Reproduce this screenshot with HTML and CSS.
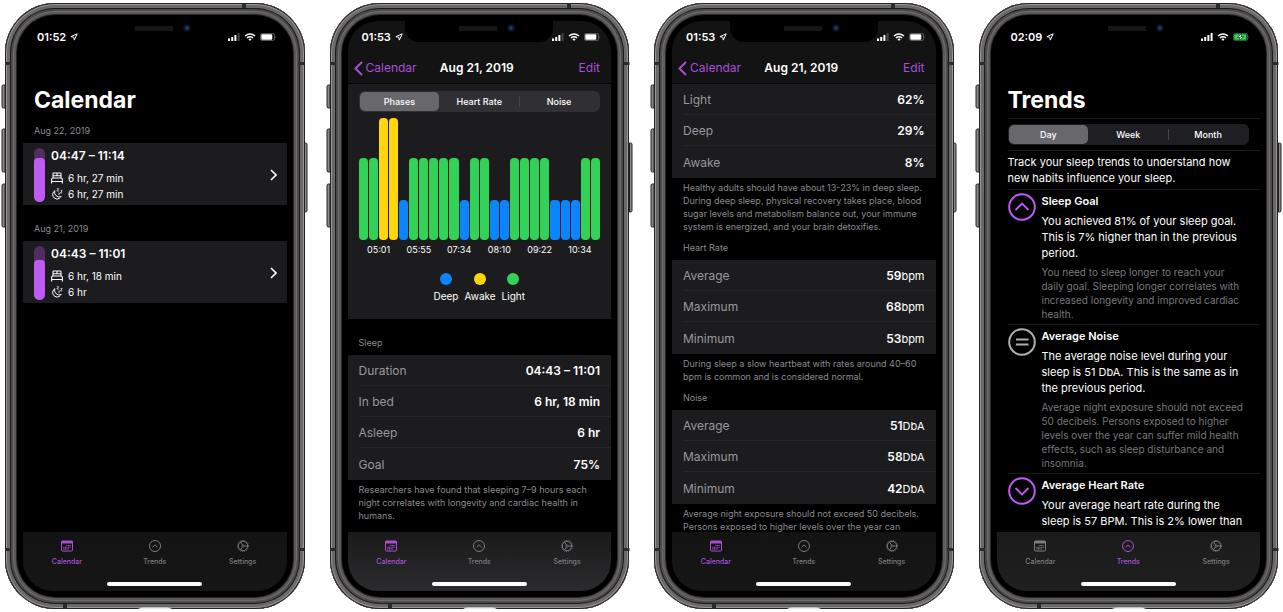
FILE: index.html
```html
<!DOCTYPE html>
<html lang="en">
<head>
<meta charset="utf-8">
<meta name="viewport" content="width=device-width, initial-scale=1">
<title>Sleep tracker</title>
<link rel="stylesheet" href="styles.css">
</head>
<body>
<svg class="sprite" aria-hidden="true">
  <defs>
    <symbol id="hardware" viewBox="-4 0 307.5 606">
      <g fill="#8b8989" stroke="#222" stroke-width="1">
        <path d="M0 82h-1.500q-1.500 0-1.500 1.500v20q0 1.500 1.500 1.500H0z"/>
        <path d="M0 126h-1.500q-1.500 0-1.500 1.500v40q0 1.500 1.500 1.500H0z"/>
        <path d="M0 181h-1.500q-1.500 0-1.500 1.500v40q0 1.500 1.500 1.500H0z"/>
        <path d="M299.500 140h1q1.500 0 1.500 1.500v66q0 1.500-1.500 1.500h-1z"/>
      </g>
      <g fill="#2c2b2b">
        <path d="M0 59h6v3H0zM293.500 59h6v3h-6zM0 545h6v3H0zM293.500 545h6v3h-6zM237 0h4v5h-4zM58 601h4v5h-4z"/>
      </g>
      <path fill="#e8e8e8" d="M133 606q2-1.500 5-1.500h24q3 0 5 1.500z"/>
    </symbol>
    <symbol id="location" viewBox="0 0 8 8"><path d="M7.200.8L.9 3.700l2.900.5.5 2.900z" fill="none" stroke="currentColor" stroke-width="1" stroke-linejoin="round"/></symbol>
    <symbol id="signal-3" viewBox="0 0 12 8"><path fill="currentColor" d="M0 5.500h2V8H0zM3.200 4h2v4h-2zM6.400 2h2v6h-2z"/><path fill="#444" d="M9.600 0h2v8h-2z"/></symbol>
    <symbol id="signal-4" viewBox="0 0 12 8"><path fill="currentColor" d="M0 5.500h2V8H0zM3.200 4h2v4h-2zM6.400 2h2v6h-2zM9.600 0h2v8h-2z"/></symbol>
    <symbol id="wifi" viewBox="0 0 12 8"><path d="M1 3q5-4 10 0M2.900 5q3.100-2.500 6.200 0" fill="none" stroke="currentColor" stroke-width="1.500"/><path d="M4.300 6.100q1.700-1.200 3.400 0L6 8z" fill="currentColor"/></symbol>
    <symbol id="battery" viewBox="0 0 17 8"><rect x=".4" y=".4" width="14.200" height="7.200" rx="2" fill="none" stroke="#777" stroke-width=".8"/><rect x="1.300" y="1.200" width="11" height="5.600" rx="1" fill="currentColor"/><path d="M15.600 2.700q1.200 1.300 0 2.600z" fill="#777"/></symbol>
    <symbol id="battery-charging" viewBox="0 0 17 8"><rect x=".4" y=".4" width="14.200" height="7.200" rx="2" fill="#123c1b" stroke="#3f7a4c" stroke-width=".8"/><rect x="1.300" y="1.200" width="12" height="5.600" rx="1" fill="#32d158"/><path d="M8.800.3L4.500 4.500h2.700l-1 3.200 4.600-4.200H8z" fill="#fff" stroke="#123c1b" stroke-width=".7"/><path d="M15.600 2.700q1.200 1.300 0 2.600z" fill="#777"/></symbol>
    <symbol id="bed" viewBox="0 0 12 12"><path d="M2 5.700V1.800q0-.8.800-.8h6.400q.8 0 .8.800v3.900M6 1v3M2 3.800h8M.6 11.500V7.600Q.6 6 2 6h8q1.400 0 1.400 1.600v3.900M.6 9.500h10.800" fill="none" stroke="currentColor" stroke-width="1.100"/></symbol>
    <symbol id="moon" viewBox="0 0 12 12"><path d="M3.800 2.700a4.500 4.500 0 1 0 6.400 5.800A4.700 4.700 0 0 1 3.800 2.700z" fill="none" stroke="currentColor" stroke-width="1" stroke-linejoin="round" stroke-dasharray="14 1"/><path d="M5.800.7h1.900L5.900 3h1.900M9.400 2.600h1.800L9.400 4.900h1.900M7.600 5h1L7.600 6.300h1.100" fill="none" stroke="currentColor" stroke-width=".7"/></symbol>
    <symbol id="chevron-right" viewBox="0 0 7 12"><path d="M1 1l5 5-5 5" fill="none" stroke="currentColor" stroke-width="1.600"/></symbol>
    <symbol id="chevron-left" viewBox="0 0 9 15"><path d="M8 1L1.500 7.500 8 14" fill="none" stroke="currentColor" stroke-width="2"/></symbol>
    <symbol id="tab-calendar" viewBox="0 0 12 12"><rect x=".5" y="1" width="11" height="10" rx="1" fill="none" stroke="currentColor"/><path d="M.5 1h11v2.500H.5z" fill="currentColor"/><path d="M5.300 5.500h4.900M2.300 7.200h7.900M2.300 8.900h5.500" stroke="currentColor" stroke-width="1.100" stroke-dasharray="1.100 .5"/></symbol>
    <symbol id="tab-trends" viewBox="0 0 12 12"><circle cx="6" cy="6" r="5.500" fill="none" stroke="currentColor"/><path d="M3.500 7.200L6 4.900l2.500 2.300" fill="none" stroke="currentColor"/></symbol>
    <symbol id="tab-settings" viewBox="0 0 12 12"><circle cx="6" cy="6" r="4.700" fill="none" stroke="currentColor"/><circle cx="6" cy="6" r="5.600" fill="none" stroke="currentColor" stroke-width=".9" stroke-dasharray="1 1.199"/><circle cx="6" cy="6" r="1.100" fill="none" stroke="currentColor" stroke-width=".8"/><path d="M7 6h4M5.500 5L3.400 1.900M5.500 7l-2.100 3.100" stroke="currentColor" stroke-width=".9"/></symbol>
    <symbol id="trend-up" viewBox="0 0 28 28"><circle cx="14" cy="14" r="12.800" fill="none" stroke="currentColor" stroke-width="2"/><path d="M7.500 17L14 10.500 20.500 17" fill="none" stroke="currentColor" stroke-width="1.800"/></symbol>
    <symbol id="trend-same" viewBox="0 0 28 28"><circle cx="14" cy="14" r="12.800" fill="none" stroke="currentColor" stroke-width="2"/><path d="M8 11.500h12.500M8 16.500h12.500" stroke="currentColor" stroke-width="1.800"/></symbol>
    <symbol id="trend-down" viewBox="0 0 28 28"><circle cx="14" cy="14" r="12.800" fill="none" stroke="currentColor" stroke-width="2"/><path d="M7.500 11L14 17.500 20.500 11" fill="none" stroke="currentColor" stroke-width="1.800"/></symbol>
  </defs>
</svg>

<main class="phones">

  <section class="phone" aria-label="Calendar list">
    <svg class="hardware" aria-hidden="true"><use href="#hardware"/></svg>
    <div class="screen">
      <div class="notch"></div>
      <div class="status">
        <span class="status-time">01:52</span><svg class="icon-location"><use href="#location"/></svg>
        <svg class="icon-signal"><use href="#signal-3"/></svg><svg class="icon-wifi"><use href="#wifi"/></svg><svg class="icon-battery"><use href="#battery"/></svg>
      </div>
      <div class="content">
        <h1 class="title">Calendar</h1>
        <h2 class="group-label">Aug 22, 2019</h2>
        <a class="night" href="#night-22">
          <span class="goal"><span class="goal-fill" style="height:81%"></span></span>
          <span class="night-info">
            <strong class="night-time">04:47 – 11:14</strong>
            <span class="night-row"><svg class="icon-row"><use href="#bed"/></svg>6 hr, 27 min</span>
            <span class="night-row"><svg class="icon-row"><use href="#moon"/></svg>6 hr, 27 min</span>
          </span>
          <svg class="icon-chevron"><use href="#chevron-right"/></svg>
        </a>
        <h2 class="group-label">Aug 21, 2019</h2>
        <a class="night" href="#night-21">
          <span class="goal"><span class="goal-fill" style="height:75%"></span></span>
          <span class="night-info">
            <strong class="night-time">04:43 – 11:01</strong>
            <span class="night-row"><svg class="icon-row"><use href="#bed"/></svg>6 hr, 18 min</span>
            <span class="night-row"><svg class="icon-row"><use href="#moon"/></svg>6 hr</span>
          </span>
          <svg class="icon-chevron"><use href="#chevron-right"/></svg>
        </a>
      </div>
      <footer class="dock">
        <nav class="tabs">
          <a class="tab tab-active" href="#calendar"><svg class="icon-tab"><use href="#tab-calendar"/></svg>Calendar</a>
          <a class="tab" href="#trends"><svg class="icon-tab"><use href="#tab-trends"/></svg>Trends</a>
          <a class="tab" href="#settings"><svg class="icon-tab"><use href="#tab-settings"/></svg>Settings</a>
        </nav>
        <div class="home"></div>
      </footer>
    </div>
  </section>

  <section class="phone" aria-label="Night phases">
    <svg class="hardware" aria-hidden="true"><use href="#hardware"/></svg>
    <div class="screen">
      <div class="notch"></div>
      <header class="bar">
        <div class="status">
          <span class="status-time">01:53</span><svg class="icon-location"><use href="#location"/></svg>
          <svg class="icon-signal"><use href="#signal-3"/></svg><svg class="icon-wifi"><use href="#wifi"/></svg><svg class="icon-battery"><use href="#battery"/></svg>
        </div>
        <div class="navbar">
          <a class="back" href="#calendar"><svg class="icon-back"><use href="#chevron-left"/></svg>Calendar</a>
          <h1 class="nav-title">Aug 21, 2019</h1>
          <button class="edit" type="button">Edit</button>
        </div>
      </header>
      <div class="content">
        <div class="chart-card">
          <div class="segments">
            <button class="segment segment-on" type="button">Phases</button>
            <button class="segment" type="button">Heart Rate</button>
            <button class="segment segment-split" type="button">Noise</button>
          </div>
          <div class="chart" role="img" aria-label="Sleep phases over the night">
            <span class="phase light"></span><span class="phase light"></span><span class="phase awake"></span><span class="phase awake"></span>
            <span class="phase deep"></span><span class="phase light"></span><span class="phase light"></span><span class="phase light"></span>
            <span class="phase light"></span><span class="phase light"></span><span class="phase deep"></span><span class="phase light"></span>
            <span class="phase light"></span><span class="phase deep"></span><span class="phase deep"></span><span class="phase light"></span>
            <span class="phase light"></span><span class="phase light"></span><span class="phase light"></span><span class="phase deep"></span>
            <span class="phase deep"></span><span class="phase deep"></span><span class="phase light"></span><span class="phase light"></span>
          </div>
          <div class="axis"><span>05:01</span><span>05:55</span><span>07:34</span><span>08:10</span><span>09:22</span><span>10:34</span></div>
          <ul class="legend">
            <li class="legend-item"><span class="dot deep-dot"></span>Deep</li>
            <li class="legend-item"><span class="dot awake-dot"></span>Awake</li>
            <li class="legend-item"><span class="dot light-dot"></span>Light</li>
          </ul>
        </div>
        <h2 class="group-label">Sleep</h2>
        <table class="stats">
          <tr><th scope="row">Duration</th><td>04:43 – 11:01</td></tr>
          <tr><th scope="row">In bed</th><td>6 hr, 18 min</td></tr>
          <tr><th scope="row">Asleep</th><td>6 hr</td></tr>
          <tr><th scope="row">Goal</th><td>75%</td></tr>
        </table>
        <p class="note">Researchers have found that sleeping 7–9 hours each night correlates with longevity and cardiac health in humans.</p>
      </div>
      <footer class="dock dock-light">
        <nav class="tabs">
          <a class="tab tab-active" href="#calendar"><svg class="icon-tab"><use href="#tab-calendar"/></svg>Calendar</a>
          <a class="tab" href="#trends"><svg class="icon-tab"><use href="#tab-trends"/></svg>Trends</a>
          <a class="tab" href="#settings"><svg class="icon-tab"><use href="#tab-settings"/></svg>Settings</a>
        </nav>
        <div class="home"></div>
      </footer>
    </div>
  </section>

  <section class="phone" aria-label="Night statistics">
    <svg class="hardware" aria-hidden="true"><use href="#hardware"/></svg>
    <div class="screen">
      <div class="notch"></div>
      <header class="bar">
        <div class="status">
          <span class="status-time">01:53</span><svg class="icon-location"><use href="#location"/></svg>
          <svg class="icon-signal"><use href="#signal-3"/></svg><svg class="icon-wifi"><use href="#wifi"/></svg><svg class="icon-battery"><use href="#battery"/></svg>
        </div>
        <div class="navbar">
          <a class="back" href="#calendar"><svg class="icon-back"><use href="#chevron-left"/></svg>Calendar</a>
          <h1 class="nav-title">Aug 21, 2019</h1>
          <button class="edit" type="button">Edit</button>
        </div>
      </header>
      <div class="content">
        <table class="stats">
          <tr><th scope="row">Light</th><td>62%</td></tr>
          <tr><th scope="row">Deep</th><td>29%</td></tr>
          <tr><th scope="row">Awake</th><td>8%</td></tr>
        </table>
        <p class="note">Healthy adults should have about 13-23% in deep sleep. During deep sleep, physical recovery takes place, blood sugar levels and metabolism balance out, your immune system is energized, and your brain detoxifies.</p>
        <h2 class="group-label">Heart Rate</h2>
        <table class="stats">
          <tr><th scope="row">Average</th><td>59<span class="unit">bpm</span></td></tr>
          <tr><th scope="row">Maximum</th><td>68<span class="unit">bpm</span></td></tr>
          <tr><th scope="row">Minimum</th><td>53<span class="unit">bpm</span></td></tr>
        </table>
        <p class="note">During sleep a slow heartbeat with rates around 40–60 bpm is common and is considered normal.</p>
        <h2 class="group-label">Noise</h2>
        <table class="stats">
          <tr><th scope="row">Average</th><td>51<span class="unit">DbA</span></td></tr>
          <tr><th scope="row">Maximum</th><td>58<span class="unit">DbA</span></td></tr>
          <tr><th scope="row">Minimum</th><td>42<span class="unit">DbA</span></td></tr>
        </table>
        <p class="note">Average night exposure should not exceed 50 decibels. Persons exposed to higher levels over the year can</p>
      </div>
      <footer class="dock">
        <nav class="tabs">
          <a class="tab tab-active" href="#calendar"><svg class="icon-tab"><use href="#tab-calendar"/></svg>Calendar</a>
          <a class="tab" href="#trends"><svg class="icon-tab"><use href="#tab-trends"/></svg>Trends</a>
          <a class="tab" href="#settings"><svg class="icon-tab"><use href="#tab-settings"/></svg>Settings</a>
        </nav>
        <div class="home"></div>
      </footer>
    </div>
  </section>

  <section class="phone" aria-label="Trends">
    <svg class="hardware" aria-hidden="true"><use href="#hardware"/></svg>
    <div class="screen">
      <div class="notch"></div>
      <div class="status">
        <span class="status-time">02:09</span><svg class="icon-location"><use href="#location"/></svg>
        <svg class="icon-signal"><use href="#signal-4"/></svg><svg class="icon-wifi"><use href="#wifi"/></svg><svg class="icon-battery"><use href="#battery-charging"/></svg>
      </div>
      <div class="content">
        <h1 class="title">Trends</h1>
        <div class="trends">
          <div class="trend-range">
            <div class="segments segments-dark">
              <button class="segment segment-on" type="button">Day</button>
              <button class="segment" type="button">Week</button>
              <button class="segment segment-split" type="button">Month</button>
            </div>
          </div>
          <p class="intro">Track your sleep trends to understand how new habits influence your sleep.</p>
          <article class="trend">
            <svg class="icon-trend"><use href="#trend-up"/></svg>
            <div class="trend-text">
              <h2 class="trend-name">Sleep Goal</h2>
              <p class="trend-main">You achieved 81% of your sleep goal. This is 7% higher than in the previous period.</p>
              <p class="trend-hint">You need to sleep longer to reach your daily goal. Sleeping longer correlates with increased longevity and improved cardiac health.</p>
            </div>
          </article>
          <article class="trend">
            <svg class="icon-trend neutral"><use href="#trend-same"/></svg>
            <div class="trend-text">
              <h2 class="trend-name">Average Noise</h2>
              <p class="trend-main">The average noise level during your sleep is 51 DbA. This is the same as in the previous period.</p>
              <p class="trend-hint">Average night exposure should not exceed 50 decibels. Persons exposed to higher levels over the year can suffer mild health effects, such as sleep disturbance and insomnia.</p>
            </div>
          </article>
          <article class="trend">
            <svg class="icon-trend"><use href="#trend-down"/></svg>
            <div class="trend-text">
              <h2 class="trend-name">Average Heart Rate</h2>
              <p class="trend-main">Your average heart rate during the sleep is 57 BPM. This is 2% lower than</p>
            </div>
          </article>
        </div>
      </div>
      <footer class="dock dock-mid">
        <nav class="tabs">
          <a class="tab" href="#calendar"><svg class="icon-tab"><use href="#tab-calendar"/></svg>Calendar</a>
          <a class="tab tab-active" href="#trends"><svg class="icon-tab"><use href="#tab-trends"/></svg>Trends</a>
          <a class="tab" href="#settings"><svg class="icon-tab"><use href="#tab-settings"/></svg>Settings</a>
        </nav>
        <div class="home"></div>
      </footer>
    </div>
  </section>

</main>
</body>
</html>
```

FILE: styles.css
```css
* { box-sizing: border-box; margin: 0; padding: 0; }

body {
  background: #fff;
  color: #fff;
  font-family: Inter, "Liberation Sans", sans-serif;
  font-size: 12px;
  line-height: 16px;
}

a { color: inherit; text-decoration: none; }
button { border: 0; background: none; color: inherit; font: inherit; }
svg { display: block; flex: none; }

.sprite { position: absolute; width: 0; height: 0; }

/* Device frames */
.phones {
  display: grid;
  grid-template-columns: repeat(4, minmax(0, 1fr));
  gap: 25px;
  padding: 3px 5px;
}

.phone {
  position: relative;
  min-height: 0;
  aspect-ratio: 299 / 605;
  padding: 18px;
  border-radius: 50px;
  background: #000;
  box-shadow:
    inset 0 0 0 1px #242323,
    inset 0 0 0 2px #989696,
    inset 0 0 0 5px #6a6868,
    inset 0 0 0 6px #1c1b1b,
    inset 0 0 0 8px #4c4a4a,
    inset 0 0 0 9px #706e6e,
    inset 0 0 0 11px #5a5858,
    inset 0 0 0 12px #2a2929;
}

.hardware {
  position: absolute;
  top: 0;
  left: -4px;
  width: calc(100% + 8px);
  height: 100%;
}

.screen {
  position: relative;
  display: flex;
  flex-direction: column;
  height: 100%;
  border-radius: 30px;
  overflow: hidden;
  background: #000;
}

.notch {
  position: absolute;
  top: 0;
  left: 50%;
  width: 148px;
  height: 21px;
  margin-left: -74px;
  border-radius: 0 0 14px 14px;
  background:
    radial-gradient(circle at 106px 7px, #1d4470 0 1px, #0a1a30 2px 3px, transparent 4px),
    linear-gradient(#161616, #161616) 54px 5px / 38px 5px no-repeat,
    #000;
}

/* Status and navigation bars */
.bar { background: #131314; border-bottom: 1px solid #050505; }

.status {
  display: flex;
  align-items: center;
  gap: 4px;
  height: 32px;
  padding: 0 10px 0 14px;
}
.status-time { font-size: 11px; font-weight: 600; }
.icon-location { width: 8px; height: 8px; margin-right: auto; }
.icon-signal, .icon-wifi { width: 12px; height: 8px; }
.icon-battery { width: 17px; height: 8px; }

.navbar {
  display: grid;
  grid-template-columns: 1fr auto 1fr;
  align-items: center;
  height: 30px;
  padding: 0 11px 0 6px;
}
.back { display: flex; align-items: center; gap: 3px; color: #a94fd6; }
.icon-back { width: 9px; height: 15px; }
.nav-title { font-size: 12px; line-height: 16px; font-weight: 600; }
.edit { justify-self: end; color: #a94fd6; }

.content { flex: 1; min-height: 0; overflow-y: auto; scrollbar-width: none; }

.title {
  padding: 33px 11px 3px;
  font-size: 23px;
  line-height: 28px;
  font-weight: 700;
}

.group-label {
  padding: 7px 11px 5px;
  color: #8b8b90;
  font-size: 9px;
  line-height: 14px;
  font-weight: 400;
}

/* Calendar list */
.night {
  display: flex;
  align-items: center;
  gap: 6px;
  margin-bottom: 10px;
  padding: 5px 10px 3px 11px;
  background: #1c1c1e;
}
.goal {
  display: flex;
  align-items: flex-end;
  align-self: stretch;
  width: 11px;
  border-radius: 6px;
  overflow: hidden;
  background: #522c62;
}
.goal-fill { width: 100%; border-radius: 4px 4px 0 0; background: #bf5af2; }
.night-info { display: flex; flex: 1; flex-direction: column; }
.night-time { margin-bottom: 6px; font-weight: 600; }
.night-row { display: flex; align-items: center; gap: 5px; font-size: 10px; }
.icon-row { width: 12px; height: 12px; }
.icon-chevron { width: 7px; height: 12px; }

/* Segmented control */
.segments {
  display: grid;
  grid-template-columns: repeat(3, 1fr);
  height: 21px;
  padding: 1px;
  border-radius: 6px;
  background: #303034;
}
.segments-dark { background: #1f1f23; }
.segment { font-size: 9px; line-height: 14px; font-weight: 500; }
.segment-on { border-radius: 5px; background: #67676c; }
.segment-split { background: linear-gradient(#45454a, #45454a) left center / 1px 11px no-repeat; }

/* Phase chart */
.chart-card { margin-bottom: 10px; padding: 7px 11px 16px; background: #1c1c1e; }
.chart {
  display: grid;
  grid-template-columns: repeat(24, 1fr);
  gap: 1px;
  align-items: end;
  height: 122px;
  margin: 6px 0 4px;
}
.phase { border-radius: 4px; }
.light { height: 67%; background: #32d158; }
.awake { height: 100%; background: #ffd60a; }
.deep { height: 33%; background: #0a84ff; }
.axis {
  display: grid;
  grid-template-columns: repeat(6, 1fr);
  margin-bottom: 17px;
  font-size: 9px;
  line-height: 12px;
  text-align: center;
}
.legend {
  display: flex;
  justify-content: center;
  gap: 6px;
  list-style: none;
  font-size: 10px;
  line-height: 14px;
}
.legend-item { display: flex; flex-direction: column; align-items: center; gap: 4px; }
.dot { width: 12px; height: 12px; border-radius: 50%; }
.deep-dot { background: #0a84ff; }
.awake-dot { background: #ffd60a; }
.light-dot { background: #32d158; }

/* Statistics */
.stats {
  width: 100%;
  padding: 0 0 1px 11px;
  border-spacing: 0;
  background: #1c1c1e;
}
.stats th, .stats td { height: 31px; padding-top: 2px; border-bottom: 1px solid #252527; }
.stats tr:last-child th, .stats tr:last-child td { border-bottom: 0; }
.stats th { color: #98989d; font-weight: 400; text-align: left; }
.stats td { padding-right: 11px; font-weight: 600; text-align: right; }
.unit { font-size: 11px; font-weight: 400; }

.note {
  padding: 3px 8px 1px 11px;
  color: #8b8b90;
  font-size: 9px;
  line-height: 13px;
}

/* Trends */
.trends { padding: 1px 0 0 11px; }
.trend-range { padding: 5px 11px 5px 0; border-top: 1px solid #1b1b1d; border-bottom: 1px solid #1b1b1d; }
.intro { padding: 3px 11px 3px 0; font-size: 11px; }
.trend { display: flex; gap: 6px; padding: 3px 14px 3px 0; border-top: 1px solid #1b1b1d; }
.icon-trend { width: 28px; height: 28px; color: #bf5af2; }
.neutral { color: #aeaeb2; }
.trend-text { flex: 1; min-width: 0; }
.trend-name { margin-bottom: 4px; font-size: 11px; line-height: 16px; font-weight: 600; }
.trend-main { margin-bottom: 4px; font-size: 11px; }
.trend-hint { color: #77777b; font-size: 10px; line-height: 14px; }

/* Tab bar */
.dock { padding: 8px 0 5px; background: linear-gradient(#131314, #161617); }
.dock-light { background: linear-gradient(#1a1a1b, #2b2b2d); }
.dock-mid { background: linear-gradient(#1b1b1c, #1f1f20); }
.tabs { display: grid; grid-template-columns: repeat(3, 1fr); }
.tab {
  display: flex;
  flex-direction: column;
  align-items: center;
  gap: 5px;
  color: #7c7c80;
  font-size: 7px;
  line-height: 10px;
  font-weight: 500;
}
.tab-active { color: #a94fd6; }
.icon-tab { width: 12px; height: 12px; }
.home { width: 36%; height: 4px; margin: 15px auto 0; border-radius: 2px; background: #fff; }
```
